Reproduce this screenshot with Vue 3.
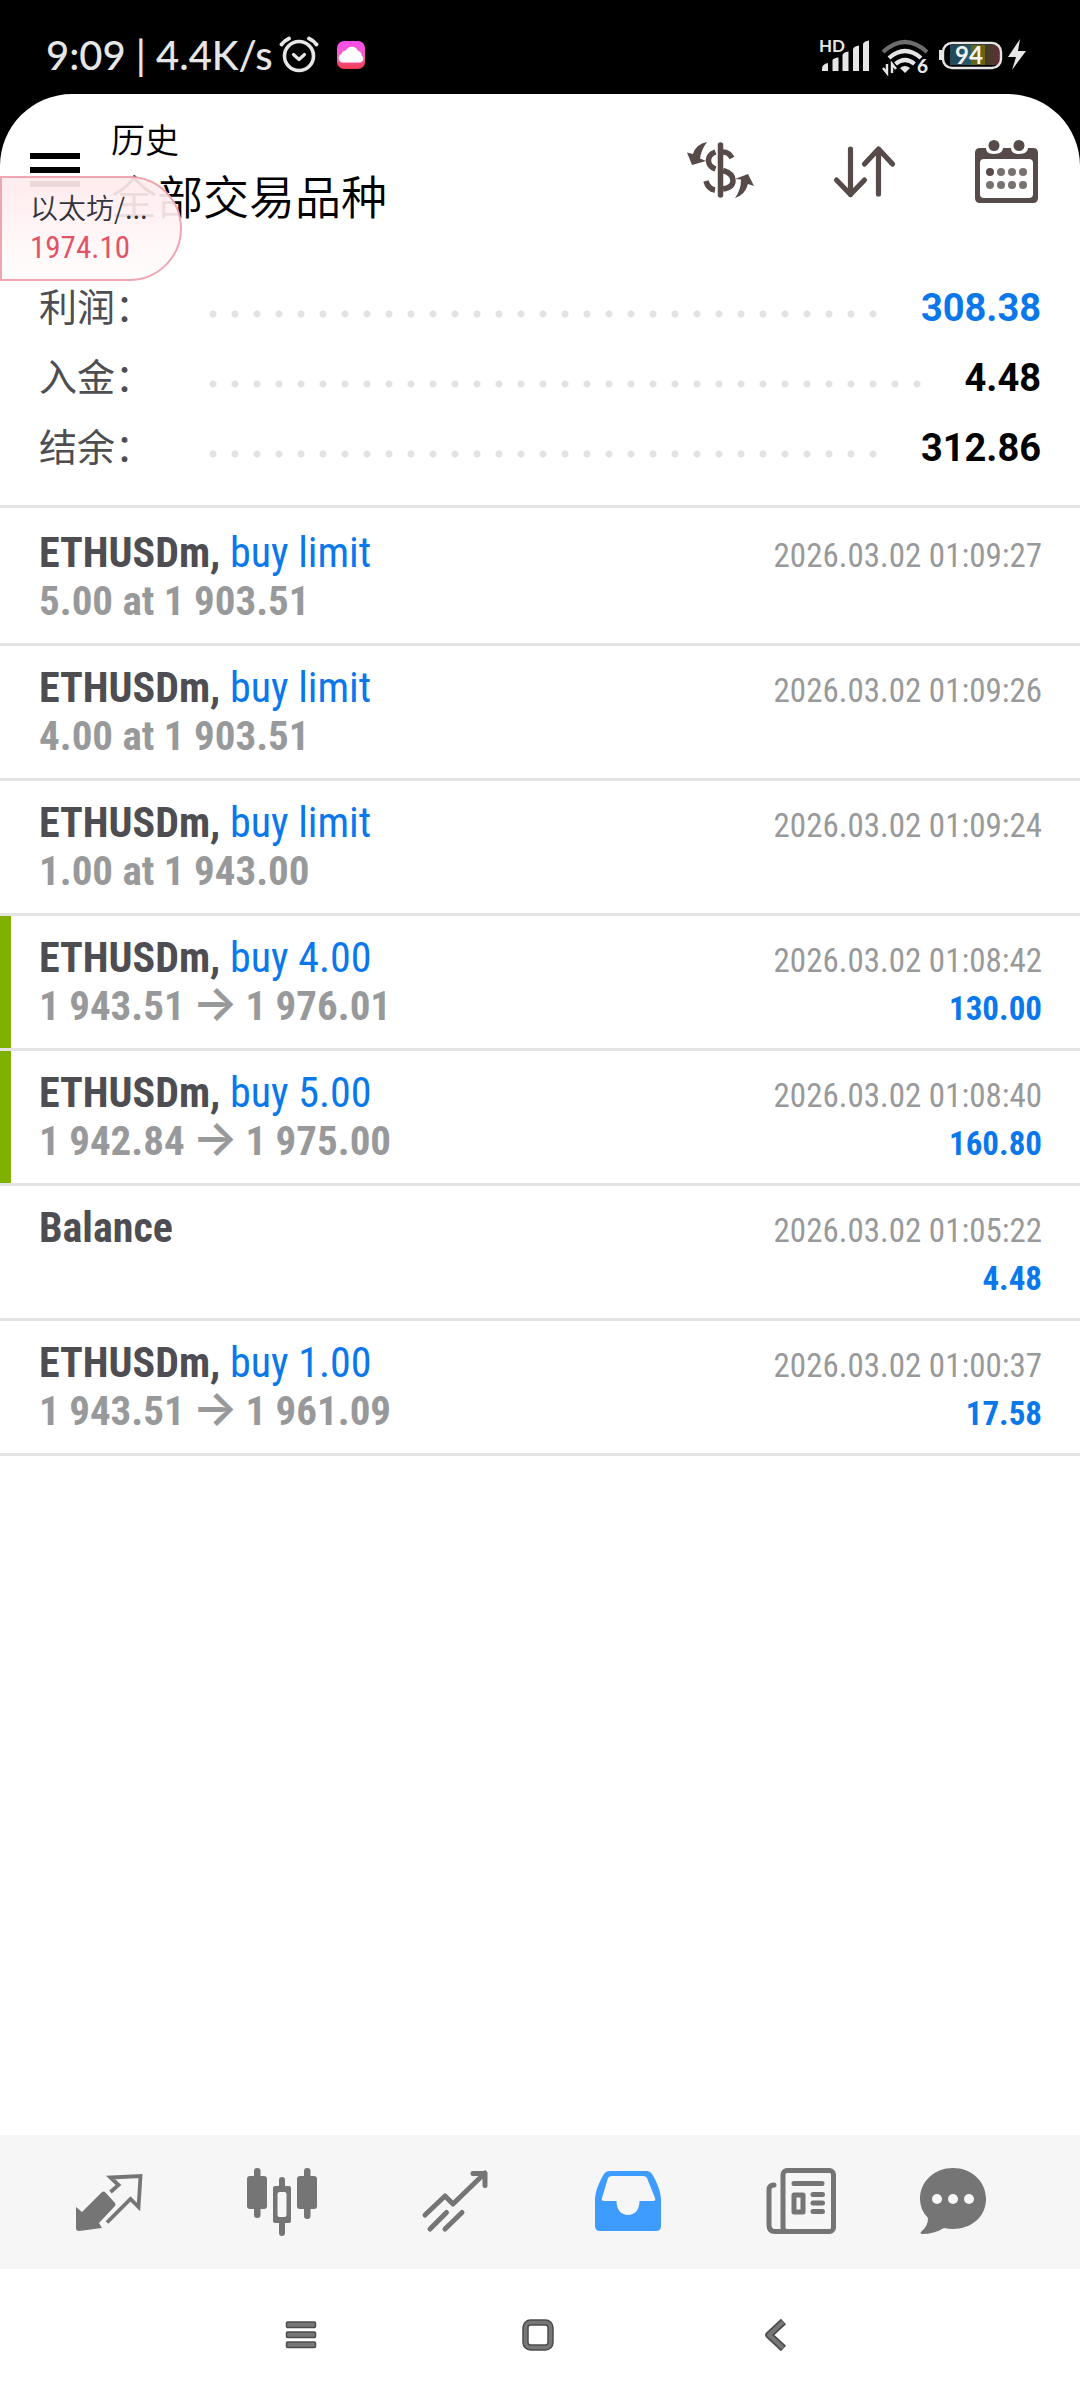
<script setup>
const summary = [
  { label: '利润：', value: '308.38', tone: 'gain' },
  { label: '入金：', value: '4.48', tone: '' },
  { label: '结余：', value: '312.86', tone: '' }
]

const deals = [
  { symbol: 'ETHUSDm', side: 'buy limit', detail: '5.00 at 1 903.51', time: '2026.03.02 01:09:27' },
  { symbol: 'ETHUSDm', side: 'buy limit', detail: '4.00 at 1 903.51', time: '2026.03.02 01:09:26' },
  { symbol: 'ETHUSDm', side: 'buy limit', detail: '1.00 at 1 943.00', time: '2026.03.02 01:09:24' },
  { symbol: 'ETHUSDm', side: 'buy 4.00', from: '1 943.51', to: '1 976.01', time: '2026.03.02 01:08:42', profit: '130.00', marked: true },
  { symbol: 'ETHUSDm', side: 'buy 5.00', from: '1 942.84', to: '1 975.00', time: '2026.03.02 01:08:40', profit: '160.80', marked: true },
  { symbol: 'Balance', time: '2026.03.02 01:05:22', profit: '4.48' },
  { symbol: 'ETHUSDm', side: 'buy 1.00', from: '1 943.51', to: '1 961.09', time: '2026.03.02 01:00:37', profit: '17.58' }
]
</script>

<template>
  <div class="screen">
    <div class="status">
      <span class="clock">9:09 | 4.4K/s</span>
      <svg class="alarm" width="40" height="38" viewBox="0 0 40 38" fill="none" stroke="#e6e6e6" stroke-linecap="round" stroke-linejoin="round">
        <circle cx="20" cy="20" r="14.5" stroke-width="3.6" />
        <path d="M14.500 18.500l5.500 5 5.500-5" stroke-width="3.2" />
        <path d="M2.500 8.500q3-4 7.500-6M37.500 8.500q-3-4-7.500-6" stroke-width="3.800" />
      </svg>
      <svg class="cloud" width="28" height="28" viewBox="0 0 28 28">
        <defs>
          <linearGradient id="cloudBg" x1="0" y1="0" x2="0" y2="1">
            <stop offset="0" stop-color="#f94bf0" />
            <stop offset=".5" stop-color="#f35fc4" />
            <stop offset="1" stop-color="#f23a4a" />
          </linearGradient>
        </defs>
        <rect width="28" height="28" rx="7" fill="url(#cloudBg)" />
        <path d="M5 21.500a4.500 4.500 0 0 1-.5-8.500A5 5 0 0 1 9 9.500a6.500 6.500 0 0 1 12 .5 4 4 0 0 1 3.500 4.500 3.800 3.800 0 0 1-1 7z" fill="#fff" />
      </svg>
      <span class="spacer"></span>
      <svg width="212" height="52" viewBox="0 -6 212 52">
        <g fill="#e6e6e6">
          <text x="0" y="17" font-size="17" font-weight="700" font-family="Lato, sans-serif">HD</text>
          <path d="M3 36v-2q0-5 6-6v8zM13.500 36V25q1-2 6-2.500V36zM23.500 36V20q1-3 6-3.500V36zM34 36V14q1-3 6-3.500V36zM44 36V9q1-3 6-3.500V36z" />
        </g>
        <g fill="none" stroke="#e6e6e6" stroke-width="4.200">
          <path d="M64 17q22-20 44 0" stroke="#6d6d6d" />
          <path d="M70 23q16-14 32 0" />
          <path d="M76.500 29q9.500-8 19 0" />
        </g>
        <path d="M81 33q5-4 10 0l-5 5z" fill="#e6e6e6" />
        <path d="M68 29v9l-4-5M73 38v-9l4 5" fill="none" stroke="#e6e6e6" stroke-width="2.400" />
        <text x="98" y="38" font-size="19" font-weight="900" fill="#e6e6e6" font-family="Lato, sans-serif">6</text>
        <rect x="131" y="10" width="11" height="20" fill="#24495a" />
        <rect x="142" y="10" width="10" height="20" fill="#24586b" />
        <rect x="152" y="10" width="14" height="20" fill="#666516" />
        <rect x="166" y="10" width="8" height="20" fill="#4a3a2a" />
        <rect x="174" y="10" width="7" height="20" fill="#5d3036" />
        <path d="M120 15h3v10h-3z" fill="#e6e6e6" />
        <rect x="124" y="8" width="58" height="25" rx="9" fill="none" stroke="#e6e6e6" stroke-width="2.400" />
        <text x="136" y="29" font-size="24" font-weight="700" fill="#f4f4f4" font-family="Lato, sans-serif">94</text>
        <path d="M201 4l-12 18h8l-4 13 14-19h-8z" fill="#e6e6e6" />
      </svg>
    </div>

    <main class="app">
      <header class="bar">
        <button class="icon-btn menu" aria-label="菜单">
          <span></span><span></span><span></span>
        </button>
        <div class="titles">
          <h1>历史</h1>
          <p>全部交易品种</p>
        </div>
        <div class="actions">
          <button class="icon-btn" aria-label="货币">
            <svg width="68" height="68" viewBox="0 0 68 68" fill="none" stroke="#564b49">
              <path d="M33.500 9v50" stroke-width="5.500" stroke-linecap="round" />
              <path d="M45 22q-3-6-9-6M28.500 16q-7 2.500-7 8.500t7 8.500M36 34.500q10 3 10 10t-10 8.500M28 54q-7-1-9-9" stroke-width="5.500" />
              <path d="M20 6Q9 8 6 18L0 16.500 5 29l14-4-6-2.500Q14 14 20 6zM48 62q10-3 13-14l6 2-6-12-13 5 6 .5Q54 54 48 62z" fill="#564b49" stroke="none" />
            </svg>
          </button>
          <button class="icon-btn" aria-label="排序">
            <svg width="68" height="68" viewBox="0 0 68 68" fill="none" stroke="#564b49" stroke-width="5.200" stroke-linecap="round" stroke-linejoin="round">
              <path d="M20.500 13v45.500M6.500 44l14 14.500 14-14.500M48.500 58V13M34.500 28L48.500 13l14 15" />
            </svg>
          </button>
          <button class="icon-btn" aria-label="日期">
            <svg width="68" height="68" viewBox="0 0 68 68">
              <path fill-rule="evenodd" d="M7 12h6c0 3 2 6 8 6s9-3 9-6h8c0 3 2 6 8 6s9-3 9-6h5q5 0 5 5v45q0 5-5 5H7q-5 0-5-5V17q0-5 5-5zm4 11q-4 0-4 4v31q0 4 4 4h45q4 0 4-4V27q0-4-4-4z" fill="#564b49" />
              <circle cx="21" cy="9.500" r="5.500" fill="#564b49" />
              <circle cx="46" cy="9.500" r="5.500" fill="#564b49" />
              <circle cx="17" cy="36" r="4" fill="#564b49" />
              <g fill="#777170">
                <circle cx="28" cy="36" r="4" /><circle cx="39" cy="36" r="4" /><circle cx="50" cy="36" r="4" />
                <circle cx="17" cy="49" r="4" /><circle cx="28" cy="49" r="4" /><circle cx="39" cy="49" r="4" /><circle cx="50" cy="49" r="4" />
              </g>
            </svg>
          </button>
        </div>
      </header>

      <aside class="ticker">
        <span class="ticker-name">以太坊/...</span>
        <span class="ticker-price">1974.10</span>
      </aside>

      <dl class="summary">
        <div v-for="item in summary" :key="item.label" class="sum-row">
          <dt>{{ item.label }}</dt>
          <dd class="dots" aria-hidden="true"></dd>
          <dd class="sum-value" :class="item.tone">{{ item.value }}</dd>
        </div>
      </dl>

      <ul class="deals">
        <li v-for="deal in deals" :key="deal.time" class="deal" :class="{ marked: deal.marked }">
          <div class="line">
            <span class="name"><b>{{ deal.symbol }}<template v-if="deal.side">,</template></b><span v-if="deal.side" class="side">{{ ' ' + deal.side }}</span></span>
            <time>{{ deal.time }}</time>
          </div>
          <div class="line">
            <span class="detail"><template v-if="deal.from">{{ deal.from }} <i class="arrow">→</i> {{ deal.to }}</template><template v-else>{{ deal.detail || '&nbsp;' }}</template></span>
            <span class="profit">{{ deal.profit }}</span>
          </div>
        </li>
      </ul>
    </main>

    <nav class="tabs">
      <a href="#quotes" aria-label="行情">
        <svg width="70" height="70" viewBox="0 0 70 70">
          <path d="M2 40l6 5 20-20q2-1 3 0l10 11q1 2 0 3L25 56l3 5-23 3q-3 0-3-3z" fill="#757575" />
          <path d="M36.500 25l8-7-8-7.500L66.500 9l-2 31-8-8-23.500 23.500" fill="none" stroke="#757575" stroke-width="3.800" />
        </svg>
      </a>
      <a href="#charts" aria-label="图表">
        <svg width="70" height="70" viewBox="0 0 70 70" fill="#757575">
          <rect x="0" y="9" width="20" height="33" rx="3" /><rect x="7" y="1" width="6.500" height="50" rx="3" />
          <rect x="50" y="9" width="20" height="33" rx="3" /><rect x="57" y="1" width="6.500" height="51" rx="3" />
          <path fill-rule="evenodd" d="M32 13a3 3 0 0 1 6 0v6h4q2 0 2 2v33q0 2-2 2h-4v10a3 3 0 0 1-6 0V56h-4q-2 0-2-2V21q0-2 2-2h4zM32.500 25q-2 0-2 2v21q0 2 2 2h5q2 0 2-2V27q0-2-2-2z" />
        </svg>
      </a>
      <a href="#trade" aria-label="交易">
        <svg width="70" height="70" viewBox="0 0 70 70" fill="none" stroke="#757575" stroke-width="5" stroke-linecap="round" stroke-linejoin="round">
          <path d="M5 48L25 29l8 8L65 6M53 6.500h12v12M10 62l16.500-16.500M25 62l17-16.500" />
        </svg>
      </a>
      <a href="#history" aria-label="历史" aria-current="page">
        <svg width="70" height="70" viewBox="0 0 70 70">
          <path fill-rule="evenodd" d="M17 4h37q3 0 5 3c5 8 9 18 9 26v26q0 5-5 5H7q-5 0-5-5V33C2 25 6 15 11 7q2-3 6-3zm2 5q-3 0-4 2L9 31q-1 3 2 3h12.500c0 9 5 14 11.500 14s11.500-5 11.500-14H60q3 0 2-3L54 11q-1-2-4-2z" fill="#3f9cff" />
        </svg>
      </a>
      <a href="#news" aria-label="新闻">
        <svg width="70" height="70" viewBox="0 0 70 70" fill="none" stroke="#757575" stroke-width="5" stroke-linecap="round" stroke-linejoin="round">
          <rect x="17" y="3.500" width="50.500" height="61" rx="4" />
          <path d="M8 18q-5 0-5 5v35q0 6.500 6 6.500h13" />
          <path d="M28 16.500h28M47 27.500h9.500M47 36h9.500M47 44.500h9.500" />
          <rect x="28" y="28" width="9" height="17" />
        </svg>
      </a>
      <a href="#chat" aria-label="聊天">
        <svg width="70" height="70" viewBox="0 0 70 70">
          <path d="M35 1C53 1 68 14 68 32S53 62 35 62q-5 0-9-1Q16 67 4 67q-3-1 0-3 6-5 6-13Q2 43 2 32C2 14 17 1 35 1z" fill="#757575" />
          <g fill="#f6f6f6"><circle cx="19" cy="32" r="5" /><circle cx="35" cy="32" r="5" /><circle cx="51" cy="32" r="5" /></g>
        </svg>
      </a>
    </nav>

    <div class="system">
      <button class="icon-btn" aria-label="最近任务">
        <svg width="36" height="36" viewBox="0 0 36 36" fill="#777" stroke="#4c4c4c" stroke-width="1.500">
          <rect x="3.500" y="5" width="29" height="5.500" rx="1" /><rect x="3.500" y="15" width="29" height="5.500" rx="1" /><rect x="3.500" y="25" width="29" height="5.500" rx="1" />
        </svg>
      </button>
      <button class="icon-btn" aria-label="主页">
        <svg width="36" height="36" viewBox="0 0 36 36" fill="none">
          <rect x="5.500" y="5.500" width="25" height="25" rx="5" stroke="#4c4c4c" stroke-width="6.500" />
          <rect x="5.500" y="5.500" width="25" height="25" rx="5" stroke="#777" stroke-width="3.500" />
        </svg>
      </button>
      <button class="icon-btn" aria-label="返回">
        <svg width="36" height="36" viewBox="0 0 36 36" fill="none" stroke-linejoin="round">
          <path d="M26.500 4.500L12 18l14.500 13.500" stroke="#4c4c4c" stroke-width="7.500" />
          <path d="M26 5L12 18l14 13" stroke="#777" stroke-width="4" />
        </svg>
      </button>
    </div>
  </div>
</template>

<style>
body {
  margin: 0;
  background: #000;
}
</style>

<style scoped>
.screen {
  display: flex;
  flex-direction: column;
  min-height: 100vh;
  background: #000;
  color: #000;
  font-family: Roboto, "Noto Sans CJK SC", sans-serif;
}

.status {
  display: flex;
  align-items: center;
  height: 94px;
  padding: 16px 49px 0 46px;
  box-sizing: border-box;
}

.clock {
  color: #e6e6e6;
  font: 500 40px/48px Lato, sans-serif;
}

.alarm {
  margin-left: 6px;
}

.cloud {
  margin-left: 18px;
}

.spacer {
  flex: 1;
}

.app {
  position: relative;
  flex: 1;
  background: #fff;
  border-radius: 72px 72px 0 0;
}

.icon-btn {
  display: flex;
  padding: 0;
  border: 0;
  background: none;
}

.bar {
  display: flex;
  align-items: center;
  height: 152px;
  padding: 0 39px 4px 30px;
}

.menu {
  flex-direction: column;
  gap: 8px;
  width: 50px;
}

.menu span {
  width: 50px;
  height: 6px;
  background: #000;
}

.titles {
  flex: 1;
  margin-left: 31px;
  font-family: "Noto Sans CJK SC", sans-serif;
  font-weight: 350;
}

.titles h1,
.titles p {
  margin: 0;
  font-weight: inherit;
}

.titles h1 {
  font-size: 34px;
  line-height: 48px;
}

.titles p {
  font-size: 46px;
  line-height: 62px;
}

.actions {
  display: flex;
  gap: 75px;
}

.ticker {
  position: absolute;
  top: 82px;
  left: 0;
  display: flex;
  flex-direction: column;
  width: 182px;
  height: 105px;
  padding: 9px 0 0 28px;
  box-sizing: border-box;
  border: 2px solid #efa6b0;
  border-radius: 0 53px 53px 0;
  background: linear-gradient(rgba(255, 234, 237, 0.92), rgba(255, 253, 253, 0.92));
}

.ticker-name {
  color: #33333d;
  font: 350 28px/40px "Noto Sans CJK SC", sans-serif;
}

.ticker-price {
  color: #e05565;
  font: 400 31px/42px "Roboto Condensed", Roboto, sans-serif;
}

.summary {
  margin: 0;
  padding: 23px 39px 22px;
  border-bottom: 3px solid #e4e4e4;
}

.sum-row {
  display: flex;
  align-items: center;
  height: 70px;
}

.sum-row dt {
  width: 163px;
  padding-bottom: 6px;
  color: #4d4d52;
  font: 400 38px/56px "Noto Sans CJK SC", sans-serif;
}

.sum-row dd {
  margin: 0;
}

.sum-row .dots {
  flex: 1;
  height: 8px;
  margin: 12px 34px 0 0;
  background: radial-gradient(circle, #e2e2e2 3px, transparent 4px) 0 0 / 22px 8px repeat-x;
}

.sum-value {
  font-size: 38px;
  font-weight: 700;
}

.sum-value.gain,
.profit,
.side {
  color: #0a78eb;
}

.deals {
  margin: 0;
  padding: 3px 0 0;
  list-style: none;
  font-family: "Roboto Condensed", Roboto, sans-serif;
}

.deal {
  height: 135px;
  padding: 18px 38px 0 39px;
  box-sizing: border-box;
  border-bottom: 3px solid #e4e4e4;
}

.deal.marked {
  background: linear-gradient(#80b000, #80b000) 0 0 / 11px 100% no-repeat padding-box;
}

.line {
  display: flex;
  align-items: baseline;
  justify-content: space-between;
  height: 48px;
  line-height: 48px;
  white-space: pre;
}

.name {
  font-size: 42px;
}

.name b {
  color: #4d4d52;
}

.detail {
  color: #98999b;
  font-size: 41px;
  font-weight: 700;
}

.arrow {
  margin: 0 -2px;
  font: 600 48px/40px Inter, sans-serif;
}

time {
  color: #98999b;
  font-size: 33px;
}

.profit {
  font-size: 33px;
  font-weight: 700;
}

.tabs {
  display: grid;
  grid-template-columns: repeat(5, 173fr) 132fr;
  padding: 0 61px 0 22px;
  height: 134px;
  background: #f6f6f6;
}

.tabs a {
  display: flex;
  align-items: center;
  justify-content: center;
}

.system {
  display: flex;
  justify-content: center;
  gap: 201px;
  height: 131px;
  align-items: center;
  padding-right: 4px;
  background: #fff;
}
</style>
